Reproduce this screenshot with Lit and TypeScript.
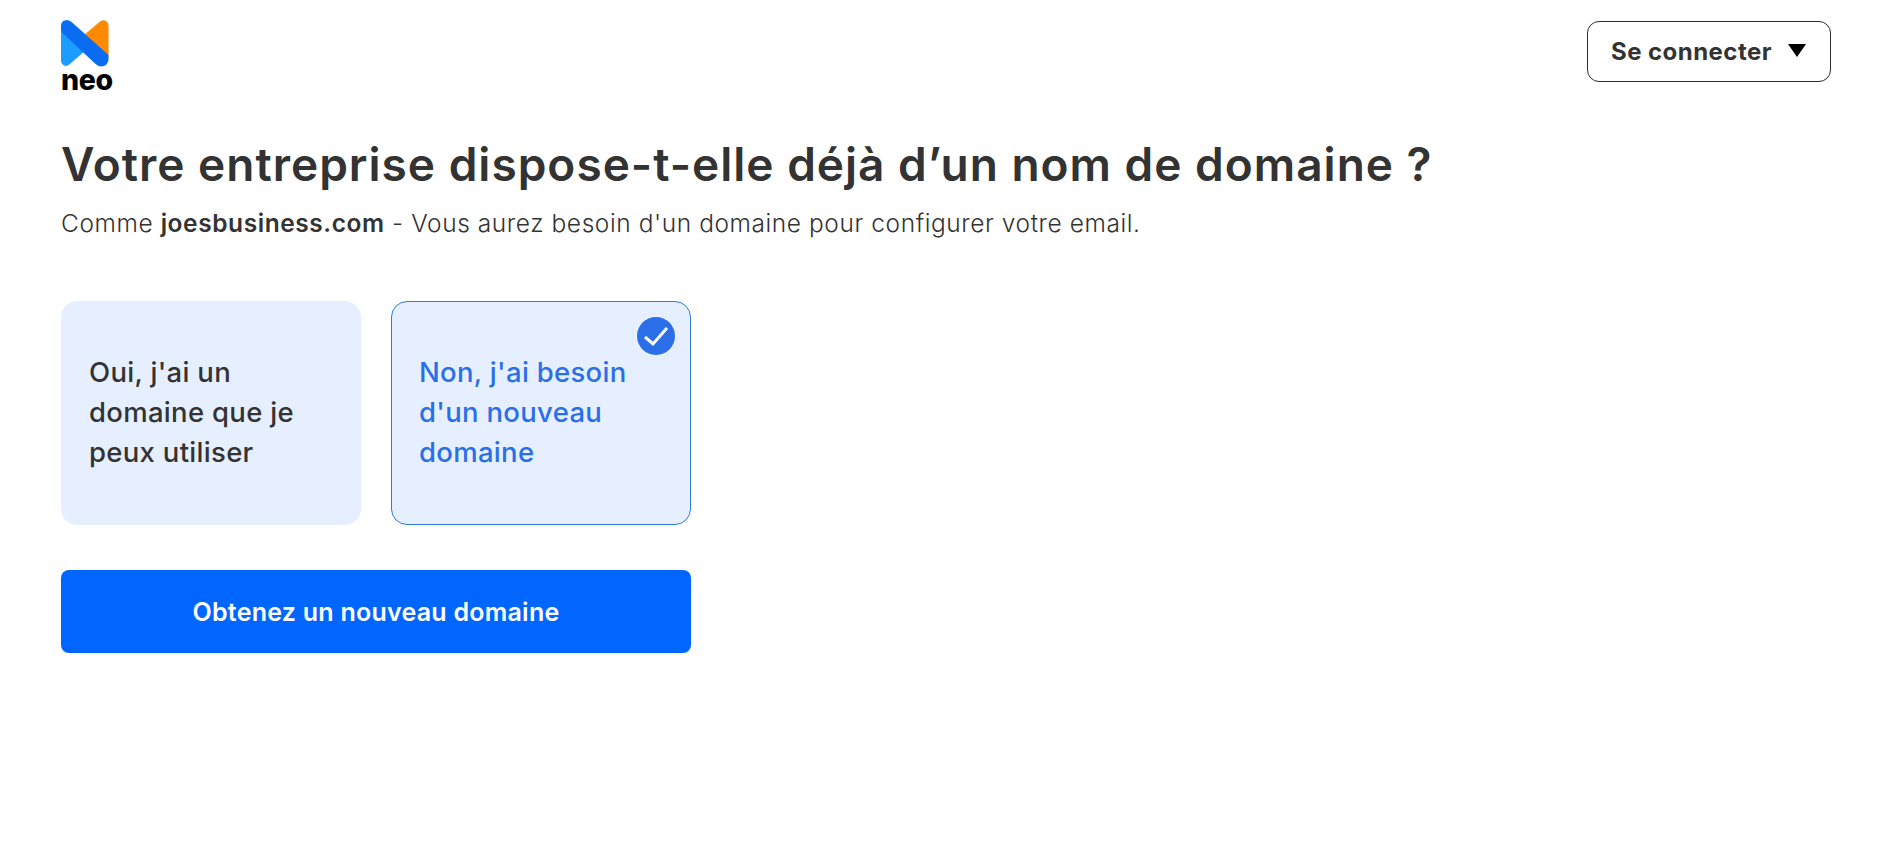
import { LitElement, html, css } from "lit";
import { customElement } from "lit/decorators.js";

@customElement("app-root")
export class AppRoot extends LitElement {
  static styles = css`
    :host {
      display: block;
      min-height: 847px;
      background: #fff;
      color: #333;
      font-family: Inter, "Noto Sans", sans-serif;
      box-sizing: border-box;
      padding: 19px 57px 0 61px;
    }
    header {
      display: flex;
      justify-content: space-between;
      align-items: flex-start;
      height: 115px;
    }
    .logo {
      display: block;
      width: 54px;
      height: 74px;
    }
    .logo-word {
      font-family: Inter, sans-serif;
      font-weight: 800;
      font-size: 28.5px;
      line-height: 24px;
      color: #000;
      display: block;
      margin-top: 1px;
      letter-spacing: -0.3px;
    }
    .mark { display: block; width: 48px; height: 47px; margin-top: 1px; }
    .login {
      box-sizing: border-box;
      width: 244px;
      height: 61px;
      margin-top: 2px;
      border: 1px solid #2b2b33;
      border-radius: 12px;
      background: #fff;
      display: flex;
      align-items: center;
      gap: 16px;
      padding: 0 23px;
      font: 700 24px Inter, sans-serif;
      color: #333;
      letter-spacing: 0.45px;
    }
    .tri { width: 18px; height: 13px; display: block; margin-top: -3px; }
    h1 {
      margin: 0;
      font-size: 46px;
      line-height: 60px;
      font-weight: 600;
      color: #333;
      letter-spacing: 1px;
    }
    .sub {
      margin: 12px 0 0;
      font-size: 24.5px;
      line-height: 34px;
      font-weight: 300;
      color: #333;
      letter-spacing: 0.57px;
    }
    .sub b { font-weight: 600; }
    .cards {
      display: flex;
      gap: 30px;
      margin-top: 61px;
    }
    .card {
      position: relative;
      box-sizing: border-box;
      width: 300px;
      height: 224px;
      padding: 0 27px 2px;
      border-radius: 16px;
      background: #e6efff;
      border: 1px solid #e6efff;
      display: flex;
      align-items: center;
      font-size: 27.5px;
      line-height: 40px;
      font-weight: 500;
      color: #333;
      letter-spacing: 0.3px;
    }
    .card.on {
      border-color: #2f7bdc;
      color: #2a6fe8;
    }
    .check {
      position: absolute;
      top: 15px;
      right: 15px;
      width: 38px;
      height: 38px;
    }
    .cta {
      box-sizing: border-box;
      display: flex;
      width: 630px;
      height: 83px;
      margin-top: 45px;
      border-radius: 8px;
      background: #0066ff;
      color: #fff;
      align-items: center;
      justify-content: center;
      font-size: 25px;
      font-weight: 600;
      letter-spacing: 0.25px;
    }
  `;

  render() {
    return html`
      <header>
        <div class="logo">
          <svg class="mark" viewBox="0 0 48 47" aria-hidden="true">
            <path d="M22 16 L39 1.5 Q42 -0.5 45 0.8 Q47.5 2.5 47.5 6 L47.5 38 Z" fill="#ff8a00"/>
            <path d="M0 10 L25 30 L9.5 43.5 Q6 47 3 45.5 Q0 44 0 40 Z" fill="#1a9dff"/>
            <path d="M1.5 1.5 Q6 -1.5 10 1.5 L47.5 35 L47.5 40 Q46 46.5 40.5 46.5 Q37 46.5 34 43.5 L1.5 13 Q-1 10 0 5 Q0.3 3 1.5 1.5 Z" fill="#0a6cf2"/>
          </svg>
          <span class="logo-word">neo</span>
        </div>
        <div class="login">
          <span>Se connecter</span>
          <svg class="tri" viewBox="0 0 18 13" aria-hidden="true"><path d="M0 0H18L9 13Z" fill="#000"/></svg>
        </div>
      </header>
      <h1>Votre entreprise dispose-t-elle déjà d’un nom de domaine ?</h1>
      <p class="sub">Comme <b>joesbusiness.com</b> - Vous aurez besoin d'un domaine pour configurer votre email.</p>
      <div class="cards">
        <div class="card">Oui, j'ai un domaine que je peux utiliser</div>
        <div class="card on">
          Non, j'ai besoin d'un nouveau domaine
          <svg class="check" viewBox="0 0 38 38" aria-hidden="true">
            <circle cx="19" cy="19" r="19" fill="#2a6fe8"/>
            <path d="M8 20 L16 27 L30 11" fill="none" stroke="#fff" stroke-width="3"/>
          </svg>
        </div>
      </div>
      <div class="cta">Obtenez un nouveau domaine</div>
    `;
  }
}
